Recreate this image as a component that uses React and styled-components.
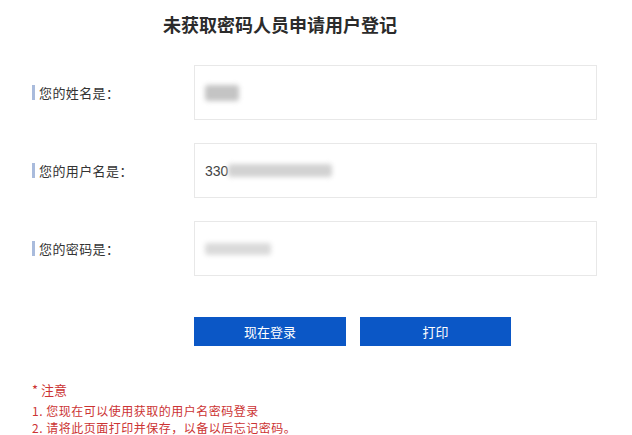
import React from "react";
import styled, { createGlobalStyle } from "styled-components";

const Global = createGlobalStyle`
  html, body { margin: 0; padding: 0; background: #fff; }
  body { font-family: "Noto Sans CJK SC", "Liberation Sans", sans-serif; color: #333; }
`;

const Page = styled.div`
  width: 632px;
  height: 435px;
  overflow: hidden;
  padding: 12px 0 0 32px;
  box-sizing: border-box;
`;

const Title = styled.h1`
  margin: 0 0 29px 131px;
  font-size: 18px;
  line-height: 24px;
  font-weight: 700;
  color: #2b2b2b;
`;

const Form = styled.div`
  display: grid;
  grid-template-columns: 162px 403px;
  row-gap: 23px;
  align-items: center;
`;

const Label = styled.div`
  display: flex;
  align-items: center;
  gap: 4px;
  font-size: 13px;
  color: #333;
  letter-spacing: 0.4px;
  &::before {
    content: "";
    width: 3px;
    height: 15px;
    background: #a9bbdc;
  }
`;

const Field = styled.div`
  height: 55px;
  box-sizing: border-box;
  border: 1px solid #e8e8e8;
  display: flex;
  align-items: center;
  padding-left: 10px;
  font-size: 14px;
  color: #444;
  font-family: "Liberation Sans", sans-serif;
`;

const Blur = styled.span`
  display: inline-block;
  width: ${(p) => p.$w}px;
  height: ${(p) => p.$h || 14}px;
  background: ${(p) => p.$c || "#cfcfcf"};
  filter: blur(2.5px);
  border-radius: 3px;
`;

const Buttons = styled.div`
  display: flex;
  gap: 14px;
  margin: 41px 0 0 162px;
`;

const Button = styled.button`
  width: ${(p) => p.$w}px;
  height: 29px;
  border: none;
  background: #0b57c6;
  color: #fff;
  font-family: "Noto Sans CJK SC", sans-serif;
  font-size: 13px;
  padding: 0;
`;

const Notes = styled.div`
  margin-top: 35px;
  color: #cc3333;
`;

const NoteHead = styled.div`
  font-size: 13px;
  line-height: 18px;
  margin-bottom: 3px;
`;

const NoteLine = styled.div`
  font-size: 12px;
  line-height: 17px;
  letter-spacing: 0.5px;
`;

export default function App() {
  return (
    <>
      <Global />
      <Page>
        <Title>未获取密码人员申请用户登记</Title>
        <Form>
          <Label>您的姓名是：</Label>
          <Field>
            <Blur $w={34} $h={16} $c="#c4c4c4" />
          </Field>
          <Label>您的用户名是：</Label>
          <Field>
            330
            <Blur $w={104} $h={13} $c="#d2d2d2" />
          </Field>
          <Label>您的密码是：</Label>
          <Field>
            <Blur $w={66} $h={12} $c="#dadada" />
          </Field>
        </Form>
        <Buttons>
          <Button $w={152}>现在登录</Button>
          <Button $w={151}>打印</Button>
        </Buttons>
        <Notes>
          <NoteHead>* 注意</NoteHead>
          <NoteLine>1. 您现在可以使用获取的用户名密码登录</NoteLine>
          <NoteLine>2. 请将此页面打印并保存，以备以后忘记密码。</NoteLine>
        </Notes>
      </Page>
    </>
  );
}
